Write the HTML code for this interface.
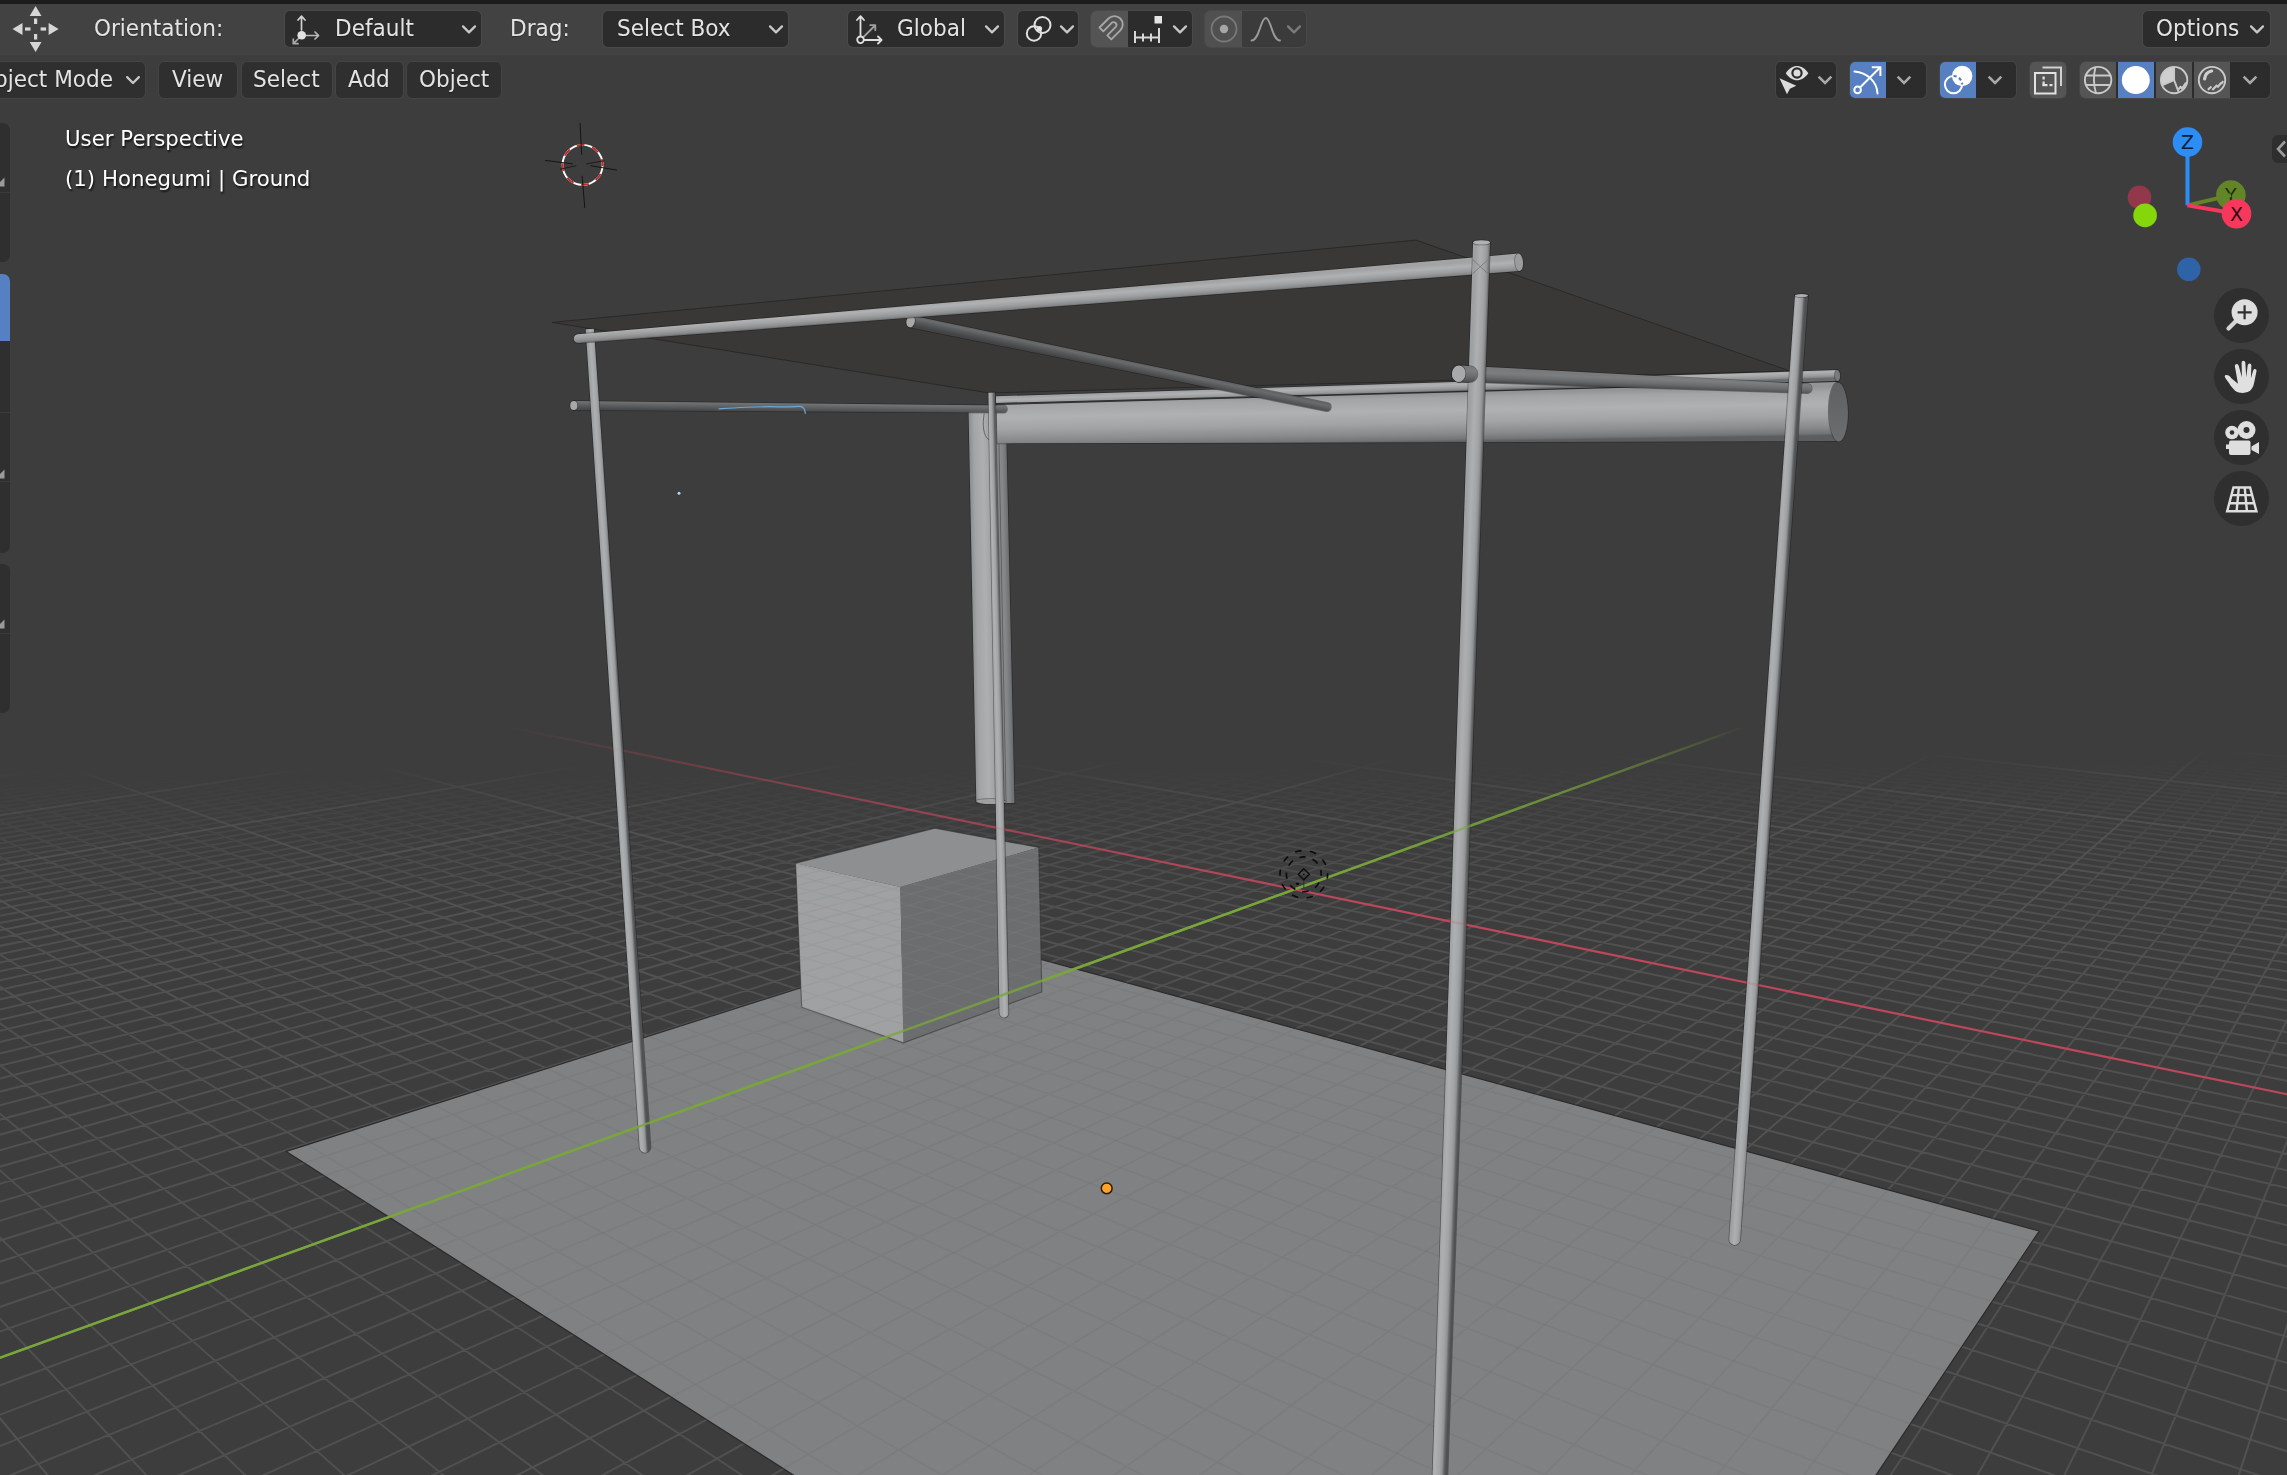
<!DOCTYPE html>
<html lang="en"><head><meta charset="utf-8"><title>Blender viewport</title>
<style>
html,body{margin:0;padding:0;background:#3d3d3d;}
body{width:2287px;height:1475px;overflow:hidden;position:relative;font-family:"DejaVu Sans","Liberation Sans",sans-serif;}
#scene{position:absolute;left:0;top:0;display:block}
#topstrip{position:absolute;left:0;top:0;width:2287px;height:3.6px;background:#1b1b1b}
#hdr{position:absolute;left:0;top:3.6px;width:2287px;height:51px;background:#424242}
.b{position:absolute;box-sizing:border-box;box-shadow:0 0 0 1px rgba(255,255,255,.04);background:#2c2c2c;border-radius:5px;height:35.8px;color:#e4e4e4;font-size:21.6px;line-height:35.8px;white-space:nowrap;overflow:hidden}
.r1{top:11.2px}
.r2{top:62.4px;height:35.2px;line-height:35.2px;background:#2f2f2f}
.lbl{position:absolute;color:#e4e4e4;font-size:21.6px;line-height:35.8px;top:10.5px;white-space:nowrap;transform:scaleY(1.03);transform-origin:0 72%;will-change:transform;text-shadow:0 1px 1px rgba(0,0,0,.35)}
.b span.t{position:absolute;top:-0.7px;transform:scaleY(1.03);transform-origin:0 72%;will-change:transform;text-shadow:0 1px 1px rgba(0,0,0,.35)}
.b svg{position:absolute}
.chev{position:absolute;top:0;height:100%}
.blue{background:#5680c2}
.gray{background:#585858}
.ov{font-size:21.3px !important;position:absolute;transform:scaleY(1.03);transform-origin:0 72%;will-change:transform;left:65px;color:#fff;font-size:21.6px;line-height:26px;white-space:nowrap;text-shadow:1px 2px 2px rgba(0,0,0,.75)}
.tb{position:absolute;left:-12px;width:21.5px;background:#2f2f2f;border-radius:7px}
.nav{position:absolute;width:55px;height:55px;border-radius:50%;background:#2f2f2f;left:2214.3px}

#objs path,#objs ellipse{stroke:#161616;stroke-opacity:.42;stroke-width:1.5px;paint-order:stroke}
#objs .ns{stroke:#77787a;stroke-opacity:1;stroke-width:.9px;paint-order:normal}
#objs #cube polygon{stroke:none}
#objs #cube path.ce{stroke:#2e2e2e;stroke-opacity:.55;stroke-width:1.1px;paint-order:normal}

.r2 span.t{top:-0.1px}

</style></head><body>
<svg id="scene" width="2287" height="1475" viewBox="0 0 2287 1475">
<defs>
<linearGradient id="fade" gradientUnits="userSpaceOnUse" x1="1143" y1="768" x2="1144.6" y2="945">
<stop offset="0" stop-color="#fff" stop-opacity="0"/><stop offset="0.2" stop-color="#fff" stop-opacity="0.3"/><stop offset="0.5" stop-color="#fff" stop-opacity="0.72"/><stop offset="0.8" stop-color="#fff" stop-opacity="0.94"/><stop offset="1" stop-color="#fff" stop-opacity="1"/>
</linearGradient>
<mask id="gm" maskUnits="userSpaceOnUse" x="0" y="0" width="2287" height="1475"><rect x="0" y="700" width="2287" height="1475" fill="url(#fade)"/></mask>
<linearGradient id="fadeM" gradientUnits="userSpaceOnUse" x1="1143" y1="758" x2="1144.2" y2="885">
<stop offset="0" stop-color="#fff" stop-opacity="0"/><stop offset="0.2" stop-color="#fff" stop-opacity="0.45"/><stop offset="0.55" stop-color="#fff" stop-opacity="0.9"/><stop offset="1" stop-color="#fff" stop-opacity="1"/>
</linearGradient>
<mask id="gmM" maskUnits="userSpaceOnUse" x="0" y="0" width="2287" height="1475"><rect x="0" y="700" width="2287" height="1475" fill="url(#fadeM)"/></mask>
<linearGradient id="fadeax" gradientUnits="userSpaceOnUse" x1="0" y1="725" x2="0" y2="900">
<stop offset="0" stop-color="#fff" stop-opacity="0"/><stop offset="0.4" stop-color="#fff" stop-opacity="0.55"/><stop offset="1" stop-color="#fff" stop-opacity="1"/>
</linearGradient>
<mask id="am" maskUnits="userSpaceOnUse" x="0" y="0" width="2287" height="1475"><rect x="0" y="700" width="2287" height="1475" fill="url(#fadeax)"/></mask>
<clipPath id="pc"><polygon points="286.2,1151.4 959.7,937.2 2039.2,1231 1552.3,1959.2"/></clipPath>
<path id="gpm" d="M9.9 735L-5 736.8M32.2 735L-5 739.5M54.5 735L-5 742.3M99.2 735L-5 748M121.6 735L-5 751M144.1 735L-5 754M166.5 735L-5 757.1M189 735L-5 760.2M211.6 735L-5 763.4M234.1 735L-5 766.6M256.7 735L-5 770M279.3 735L-5 773.3M324.7 735L-5 780.4M347.4 735L-5 784M370.1 735L-5 787.7M392.9 735L-5 791.5M415.7 735L-5 795.3M438.6 735L-5 799.3M461.4 735L-5 803.3M484.3 735L-5 807.5M507.3 735L-5 811.7M553.3 735L-5 820.5M576.3 735L-5 825M599.4 735L-5 829.7M622.5 735L-5 834.5M645.6 735L-5 839.4M668.8 735L-5 844.4M691.9 735L-5 849.6M715.2 735L-5 854.8M738.4 735L-5 860.3M785.1 735L-5 871.6M808.4 735L-5 877.5M831.8 735L-5 883.6M855.2 735L-5 889.8M878.7 735L-5 896.2M902.2 735L-5 902.8M925.7 735L-5 909.6M949.3 735L-5 916.6M972.9 735L-5 923.9M1020.1 735L-5 939M1043.8 735L-5 946.9M1067.6 735L-5 955.1M1091.3 735L-5 963.6M1115.1 735L-5 972.4M1138.9 735L-5 981.4M1162.8 735L-5 990.8M1186.7 735L-5 1000.5M1210.6 735L-5 1010.6M1258.6 735L-5 1031.9M1282.6 735L-5 1043.1M1306.7 735L-5 1054.8M1330.8 735L-5 1067M1354.9 735L-5 1079.7M1379.1 735L-5 1092.9M1403.3 735L-5 1106.6M1427.5 735L-5 1121M1451.8 735L-5 1136M1500.4 735L-5 1168.1M1524.8 735L-5 1185.3M1549.2 735L-5 1203.3M1573.7 735L-5 1222.3M1598.2 735L-5 1242.2M1622.7 735L-5 1263.2M1647.2 735L-5 1285.3M1671.8 735L-5 1308.6M1696.4 735L-5 1333.3M1745.8 735L-5 1387.2M1770.5 735L-5 1416.7M1795.3 735L-5 1448M1820.1 735L-1.3 1480M1844.9 735L83.3 1480M1869.8 735L167.9 1480M1894.7 735L252.7 1480M1919.7 735L337.6 1480M1944.7 735L422.6 1480M1994.7 735L593.1 1480M2019.8 735L678.5 1480M2045 735L764 1480M2070.1 735L849.6 1480M2095.3 735L935.4 1480M2120.6 735L1021.3 1480M2145.9 735L1107.3 1480M2171.2 735L1193.5 1480M2196.5 735L1279.8 1480M2247.3 735L1452.7 1480M2272.8 735L1539.3 1480M2292 742L1626.1 1480M2292 773.8L1713 1480M2292 812.9L1800.1 1480M2292 861.8L1887.3 1480M2292 925L1974.6 1480M2292 1009.7L2062 1480M2292 1129.2L2149.5 1480M2288.1 735L2292 735.3M2256 735L2292 738.3M2224 735L2292 741.3M2192 735L2292 744.3M2160 735L2292 747.5M2128.1 735L2292 750.6M2096.3 735L2292 753.9M2032.8 735L2292 760.5M2001.2 735L2292 764M1969.6 735L2292 767.5M1938.1 735L2292 771.1M1906.6 735L2292 774.8M1875.2 735L2292 778.5M1843.8 735L2292 782.3M1812.5 735L2292 786.2M1781.3 735L2292 790.2M1719 735L2292 798.5M1687.9 735L2292 802.8M1656.9 735L2292 807.1M1625.9 735L2292 811.6M1595 735L2292 816.2M1564.1 735L2292 820.9M1533.4 735L2292 825.7M1502.6 735L2292 830.7M1471.9 735L2292 835.7M1410.7 735L2292 846.2M1380.2 735L2292 851.7M1349.8 735L2292 857.3M1319.4 735L2292 863M1289 735L2292 868.9M1258.7 735L2292 875M1228.5 735L2292 881.2M1198.3 735L2292 887.6M1168.1 735L2292 894.2M1108 735L2292 908M1078.1 735L2292 915.2M1048.1 735L2292 922.6M1018.3 735L2292 930.3M988.5 735L2292 938.2M958.7 735L2292 946.3M929 735L2292 954.7M899.3 735L2292 963.4M869.7 735L2292 972.4M810.7 735L2292 991.2M781.3 735L2292 1001.2M751.9 735L2292 1011.5M722.5 735L2292 1022.1M693.2 735L2292 1033.2M664 735L2292 1044.7M634.8 735L2292 1056.6M605.7 735L2292 1069M576.6 735L2292 1081.9M518.6 735L2292 1109.3M489.7 735L2292 1123.9M460.8 735L2292 1139.1M432 735L2292 1155M403.2 735L2292 1171.6M374.5 735L2292 1189.1M345.8 735L2292 1207.3M317.2 735L2292 1226.4M288.6 735L2292 1246.5M231.6 735L2292 1289.9M203.2 735L2292 1313.4M174.8 735L2292 1338.2M146.5 735L2292 1364.4M118.2 735L2292 1392.2M90 735L2292 1421.6M61.8 735L2292 1453M33.6 735L2273 1480M5.6 735L2170.2 1480M-5 751.8L1965.1 1480M-5 763.2L1862.9 1480M-5 775.4L1760.8 1480M-5 788.7L1658.8 1480M-5 803L1557.1 1480M-5 818.6L1455.5 1480M-5 835.7L1354.1 1480M-5 854.4L1252.9 1480M-5 875L1151.9 1480M-5 923.1L950.3 1480M-5 951.5L849.8 1480M-5 983.5L749.4 1480M-5 1019.8L649.2 1480M-5 1061.4L549.2 1480M-5 1109.6L449.4 1480M-5 1165.9L349.7 1480M-5 1232.8L250.2 1480M-5 1313.4L150.9 1480"/><path id="gpM" d="M76.9 735L-5 745.1M302 735L-5 776.8M530.3 735L-5 816M761.7 735L-5 865.9M996.5 735L-5 931.3M1234.6 735L-5 1021M1476.1 735L-5 1151.7M1969.7 735L507.8 1480M2221.9 735L1366.2 1480M2292 1310.4L2237.2 1480M2064.6 735L2292 757.2M1750.1 735L2292 794.3M1441.3 735L2292 840.9M1138.1 735L2292 901M840.2 735L2292 981.6M260.1 735L2292 1267.7M-5 741.2L2067.6 1480M-5 897.7L1051 1480M-5 1412.4L51.7 1480"/><g id="gp"><use href="#gpm"/><use href="#gpM"/></g>
</defs>
<g mask="url(#gm)"><use href="#gpm" fill="none" stroke="#505050" stroke-width="2"/></g><g mask="url(#gmM)"><use href="#gpM" fill="none" stroke="#525252" stroke-width="2"/></g>

<polygon points="286.2,1151.4 959.7,937.2 2039.2,1231 1552.3,1959.2" fill="#808183" stroke="#2a2a2a" stroke-width="1.2"/>
<g clip-path="url(#pc)"><use href="#gp" fill="none" stroke="#6a6b6d" stroke-opacity="0.24" stroke-width="1.5"/></g>
<g mask="url(#am)"><line x1="378.1" y1="700" x2="2292" y2="1095.3" stroke="#bd485c" stroke-width="2.1"/>
<line x1="1817.9" y1="700" x2="-5" y2="1359.5" stroke="#79a63c" stroke-width="2.4"/></g>
<defs><linearGradient id="g1" gradientUnits="userSpaceOnUse" x1="1000.6" y1="621.6" x2="1010.4" y2="621.4"><stop offset="0%" stop-color="#8a8b8c"/><stop offset="50%" stop-color="#858687"/><stop offset="100%" stop-color="#6c6d6e"/></linearGradient><linearGradient id="g2" gradientUnits="userSpaceOnUse" x1="972.4" y1="605" x2="1001.8" y2="604.5"><stop offset="0%" stop-color="#8e8f90"/><stop offset="15%" stop-color="#a3a4a5"/><stop offset="45%" stop-color="#aeafb0"/><stop offset="75%" stop-color="#9c9d9e"/><stop offset="100%" stop-color="#808182"/></linearGradient><linearGradient id="g3" gradientUnits="userSpaceOnUse" x1="1416.6" y1="383.2" x2="1416.9" y2="392"><stop offset="0%" stop-color="#a2a3a4"/><stop offset="30%" stop-color="#b0b1b2"/><stop offset="65%" stop-color="#9d9e9f"/><stop offset="90%" stop-color="#868788"/><stop offset="100%" stop-color="#6c6d6e"/></linearGradient><linearGradient id="g4" gradientUnits="userSpaceOnUse" x1="1416.6" y1="393.5" x2="1417.4" y2="442.3"><stop offset="0%" stop-color="#939495"/><stop offset="10%" stop-color="#a3a4a5"/><stop offset="35%" stop-color="#b0b1b2"/><stop offset="60%" stop-color="#a2a3a4"/><stop offset="82%" stop-color="#8a8b8c"/><stop offset="95%" stop-color="#747576"/><stop offset="100%" stop-color="#5c5d5e"/></linearGradient><linearGradient id="g5" gradientUnits="userSpaceOnUse" x1="1838" y1="383" x2="1838" y2="441"><stop offset="0%" stop-color="#5f6061"/><stop offset="100%" stop-color="#6c6d6e"/></linearGradient><linearGradient id="g6" gradientUnits="userSpaceOnUse" x1="1119.9" y1="359.3" x2="1117.8" y2="369.2"><stop offset="0%" stop-color="#606162"/><stop offset="22%" stop-color="#6a6b6c"/><stop offset="55%" stop-color="#58595a"/><stop offset="85%" stop-color="#4a4b4c"/><stop offset="100%" stop-color="#434445"/></linearGradient><linearGradient id="g7" gradientUnits="userSpaceOnUse" x1="1633.6" y1="374.7" x2="1633.1" y2="387.6"><stop offset="0%" stop-color="#78797b"/><stop offset="30%" stop-color="#7c7d7f"/><stop offset="65%" stop-color="#6a6b6c"/><stop offset="90%" stop-color="#545556"/><stop offset="100%" stop-color="#464748"/></linearGradient><linearGradient id="g8" gradientUnits="userSpaceOnUse" x1="1762.1" y1="767.1" x2="1774.1" y2="767.9"><stop offset="0%" stop-color="#9fa0a1"/><stop offset="30%" stop-color="#aeafb0"/><stop offset="60%" stop-color="#a2a3a4"/><stop offset="76%" stop-color="#909192"/><stop offset="88%" stop-color="#666768"/><stop offset="100%" stop-color="#505152"/></linearGradient><linearGradient id="g9" gradientUnits="userSpaceOnUse" x1="788.6" y1="403.3" x2="788.5" y2="411.3"><stop offset="0%" stop-color="#747576"/><stop offset="30%" stop-color="#68696a"/><stop offset="70%" stop-color="#565758"/><stop offset="100%" stop-color="#48494a"/></linearGradient><linearGradient id="g10" gradientUnits="userSpaceOnUse" x1="994" y1="702.9" x2="1001.7" y2="702.7"><stop offset="0%" stop-color="#a3a4a5"/><stop offset="35%" stop-color="#b0b1b2"/><stop offset="70%" stop-color="#a0a1a2"/><stop offset="90%" stop-color="#7e7f80"/><stop offset="100%" stop-color="#5e5f60"/></linearGradient><linearGradient id="g11" gradientUnits="userSpaceOnUse" x1="612.7" y1="738.4" x2="622.2" y2="737.8"><stop offset="0%" stop-color="#9fa0a1"/><stop offset="30%" stop-color="#aeafb0"/><stop offset="60%" stop-color="#a2a3a4"/><stop offset="76%" stop-color="#909192"/><stop offset="88%" stop-color="#666768"/><stop offset="100%" stop-color="#505152"/></linearGradient><linearGradient id="g12" gradientUnits="userSpaceOnUse" x1="1048.1" y1="293.9" x2="1049.1" y2="307.1"><stop offset="0%" stop-color="#a2a3a4"/><stop offset="30%" stop-color="#b0b1b2"/><stop offset="65%" stop-color="#9d9e9f"/><stop offset="90%" stop-color="#868788"/><stop offset="100%" stop-color="#6c6d6e"/></linearGradient><linearGradient id="g13" gradientUnits="userSpaceOnUse" x1="1452.8" y1="858.9" x2="1468.8" y2="859.5"><stop offset="0%" stop-color="#9fa0a1"/><stop offset="30%" stop-color="#aeafb0"/><stop offset="60%" stop-color="#a2a3a4"/><stop offset="76%" stop-color="#909192"/><stop offset="88%" stop-color="#666768"/><stop offset="100%" stop-color="#505152"/></linearGradient><linearGradient id="g14" gradientUnits="userSpaceOnUse" x1="1464.5" y1="365.8" x2="1463.7" y2="382.1"><stop offset="0%" stop-color="#78797b"/><stop offset="30%" stop-color="#7c7d7f"/><stop offset="65%" stop-color="#6a6b6c"/><stop offset="90%" stop-color="#545556"/><stop offset="100%" stop-color="#464748"/></linearGradient></defs><g id="objs"><g id="cube"><polygon points="795.6,863.3 935,828.2 1038.7,847.5 900.4,887.1" fill="#8e8f90" /><polygon points="795.6,863.3 900.4,887.1 903.4,1042.8 801.7,1007.2" fill="#a0a1a2" /><polygon points="900.4,887.1 1038.7,847.5 1041.8,991.9 903.4,1042.8" fill="#6c6d6e" /><path d="M795.6 863.3L935 828.2L1038.7 847.5L1041.8 991.9L903.4 1042.8L801.7 1007.2Z" fill="none" class="ce"/></g>
<clipPath id="cc"><polygon points="795.6,863.3 900.4,887.1 1038.7,847.5 1041.8,991.9 903.4,1042.8 801.7,1007.2"/></clipPath>
<g clip-path="url(#cc)"><use href="#gp" fill="none" stroke="#88898a" stroke-opacity="0.2" stroke-width="1.5"/></g>
<polygon points="551.9,322.4 1416.1,240.1 1790,371 989,393" fill="#393836" stroke="#1e1e1d" stroke-opacity="0.6" stroke-width="1" stroke-linejoin="round"/>
<path d="M997 440.1 L1004.1 803.1 L1014.5 802.9 L1006.4 439.9Z" fill="url(#g1)" />
<path d="M968.5 408.3 L976.3 801.8 L1005.7 801.2 L997.9 407.7Z" fill="url(#g2)" />
<ellipse cx="991" cy="801.5" rx="14.8" ry="2.6" transform="rotate(1 991 801.5)" fill="#9fa0a1" />
<path d="M984.200 413.600C982.300 424 983 435.500 988.800 439.800" class="ns" fill="none" style="stroke:#5c5d5e"/>
<path d="M995.9 396.3 L1837.3 370.1 L1837.7 381.1 L996.1 402.9Z" fill="url(#g3)" />
<ellipse cx="1837.5" cy="375.6" rx="2.6" ry="5.5" transform="rotate(-1.6 1837.5 375.6)" fill="#797a7b" />
<path d="M996.7 405 L1836.6 382.1 L1837.4 441.1 L997.3 443.4Z" fill="url(#g4)" />
<defs></defs>
<ellipse cx="1838.3" cy="412" rx="9.6" ry="29.6" transform="rotate(-1 1838.3 412)" fill="url(#g5)" />
<path d="M911.8 315.5 L1327.9 403 A4.2 4.2 0 0 1 1326.3 411.2 L909.4 327.3Z" fill="url(#g6)" />
<ellipse cx="910.6" cy="321.4" rx="4.2" ry="6" transform="rotate(11.6 910.6 321.4)" fill="#a7a8a9" />
<path d="M1459.1 365.5 L1808.2 384 A4.7 4.7 0 0 1 1807.8 393.2 L1458.3 381.9Z" fill="url(#g7)" />
<ellipse cx="1458.7" cy="373.7" rx="6.8" ry="8.3" transform="rotate(2.4 1458.7 373.7)" fill="#a8a9aa" />
<path d="M1795 295.1 L1729.2 1239 A5.5 5.5 0 0 0 1740.2 1239.8 L1808 296.1Z" fill="url(#g8)" />
<ellipse cx="1801.5" cy="295.6" rx="6.5" ry="1.6" transform="rotate(0 1801.5 295.6)" fill="#adaeaf" />
<path d="M573.6 400.9 L1003.5 405.6 A3.6 3.6 0 0 1 1003.5 412.8 L573.6 409.9Z" fill="url(#g9)" />
<ellipse cx="573.8" cy="405.4" rx="3.6" ry="4.5" transform="rotate(0 573.8 405.4)" fill="#a6a7a8" />
<path d="M988.4 392.7 L999.5 1013.1 A4.5 4.5 0 0 0 1008.5 1012.9 L995 392.5Z" fill="url(#g10)" />
<path d="M585.7 329.3 L639.6 1147.6 A5.5 5.5 0 0 0 650.6 1146.8 L593.9 328.7Z" fill="url(#g11)" />
<path d="M577.8 334.3 L1518.3 253.6 L1519.7 271 L578.6 343.1 A4.4 4.4 0 0 1 577.8 334.3Z" fill="url(#g12)" />
<ellipse cx="1519" cy="262.3" rx="4" ry="8.8" transform="rotate(-4.6 1519 262.3)" fill="#9b9c9d" />
<path d="M1473.1 242.1 L1432.5 1475.7 L1447.5 1476.3 L1490.1 242.7Z" fill="url(#g13)" />
<ellipse cx="1481.6" cy="242.4" rx="8.5" ry="2.2" transform="rotate(0 1481.6 242.4)" fill="#b0b1b2" />
<path d="M1459.1 365.5 L1469.9 366.1 A8.1 8.1 0 0 1 1469.1 382.3 L1458.3 381.9Z" fill="url(#g14)" />
<ellipse cx="1458.7" cy="373.7" rx="6.8" ry="8.3" transform="rotate(2.4 1458.7 373.7)" fill="#a8a9aa" />
<path d="M1473 259.800L1487.500 273.400M1489.500 258.200L1472.300 274" stroke="#747576" stroke-width="0.9" fill="none" class="ns"/></g>
<g opacity="0.8" mask="url(#am)"><line x1="1817.9" y1="700" x2="-5" y2="1359.5" stroke="#7aa63c" stroke-width="2.4"/></g>
<g opacity="0.18" mask="url(#am)"><line x1="378.1" y1="700" x2="2292" y2="1095.3" stroke="#c14a5e" stroke-width="2.4"/></g>
<g id="cursor3d"><circle cx="582.6" cy="164.9" r="20" fill="none" stroke="#fff" stroke-width="1.900"/><circle cx="582.6" cy="164.9" r="20" fill="none" stroke="#c1272d" stroke-width="1.900" stroke-dasharray="7.850 7.850" stroke-dashoffset="6.5"/>
<g stroke="#121212" stroke-width="0.95" stroke-linecap="butt" fill="none"><path d="M545.100 160.400L572.900 163.900M590.500 165.700L617 170.100M580 122.900L581.700 154.600M582.100 175.800L584.800 208"/><path d="M560.100 169.200L576.400 165.700M586.100 163.900L604.600 160.800" stroke-opacity="0.8"/></g></g>
<g id="light" fill="none" stroke="#0b0b0b" stroke-width="1.600"><circle cx="1303.8" cy="874.3" r="23.800" stroke-dasharray="6.500 8.450" stroke-dashoffset="2"/><circle cx="1303.8" cy="874.3" r="17.400" stroke-dasharray="6.500 7.160" stroke-dashoffset="5"/><path d="M1303.8 868.8l5.500 5.500l-5.500 5.500l-5.500-5.500z" stroke-width="1.400"/><path d="M1303.8 879.8V888.500" stroke-width="1" stroke="#222" stroke-opacity="0.700"/></g><circle cx="1303.8" cy="874.3" r="0.900" fill="#0b0b0b"/><ellipse cx="1297.500" cy="883.800" rx="1.800" ry="1.100" fill="#0b0b0b"/>
<circle cx="1106.700" cy="1188.300" r="5.400" fill="#ffa32b" stroke="#2b1c08" stroke-width="1.500"/>
<path d="M719 408.800C740 407.500 760 406.200 778 406.800S795 405.800 801.500 406.600C804 407.500 805 410 805.300 413.300" fill="none" stroke="#6aa7dc" stroke-width="1.200" stroke-linecap="round"/>
<circle cx="679" cy="493.200" r="1.500" fill="#b5d4f0"/>
</svg>
<div id="topstrip"></div><div id="hdr"></div>
<svg style="position:absolute;left:10px;top:5px" width="50" height="48" viewBox="0 0 50 48"><g fill="#d6d6d6"><polygon points="25.6,1 31.5,11 19.7,11"/><polygon points="25.6,47 31.5,37 19.7,37"/><polygon points="2.5,24 12.5,18 12.5,30"/><polygon points="48.6,24 38.6,18 38.6,30"/><rect x="24" y="13.5" width="3.2" height="5.5"/><rect x="24" y="29" width="3.2" height="5.5"/><rect x="15" y="22.4" width="5.5" height="3.2"/><rect x="30.6" y="22.4" width="5.5" height="3.2"/></g></svg>
<div class="lbl" style="left:94px">Orientation:</div>
<div class="b r1" style="left:285.4px;width:195.5px"><svg style="left:4px;top:2px" width="34" height="32" viewBox="0 0 34 32"><g fill="none" stroke="#d0d0d0" stroke-width="1.7" stroke-linecap="round" stroke-linejoin="round"><path d="M12.5 17V3.5M9 7l3.5-3.8L16 7" /><path d="M17 22.5h12.5M26 19l3.6 3.5L26 26" stroke="#b9b9b9"/><path d="M9.5 25.5L4.5 30.5M4.3 26v4.7H9" stroke="#a9a9a9"/></g><circle cx="12.7" cy="22.3" r="4.3" fill="#e2e2e2"/></svg><span class="t" style="left:49.5px">Default</span><svg class="chev" style="left:175px" width="18" height="36" viewBox="0 0 18 36"><path d="M3 15.5l6 6 6-6" fill="none" stroke="#c8c8c8" stroke-width="2.3" stroke-linecap="round" stroke-linejoin="round"/></svg></div>
<div class="lbl" style="left:509.5px">Drag:</div>
<div class="b r1" style="left:602.8px;width:185.3px"><span class="t" style="left:14.5px">Select Box</span><svg class="chev" style="left:164px" width="18" height="36" viewBox="0 0 18 36"><path d="M3 15.5l6 6 6-6" fill="none" stroke="#c8c8c8" stroke-width="2.3" stroke-linecap="round" stroke-linejoin="round"/></svg></div>
<div class="b r1" style="left:848px;width:156px"><svg style="left:5px;top:2px" width="34" height="32" viewBox="0 0 34 32"><g fill="none" stroke="#e0e0e0" stroke-width="1.8" stroke-linecap="round" stroke-linejoin="round"><path d="M7.5 23V3.5M4 7l3.5-3.8L11 7"/><path d="M11 27h17.5M25 23.5l3.6 3.5L25 30.5"/><path d="M10 24.5L22 12.5M17.3 12.2h5v5" stroke="#a0a0a0"/><circle cx="7.5" cy="26.8" r="3.3" fill="#2c2c2c"/></g></svg><span class="t" style="left:49px">Global</span><svg class="chev" style="left:135px" width="18" height="36" viewBox="0 0 18 36"><path d="M3 15.5l6 6 6-6" fill="none" stroke="#c8c8c8" stroke-width="2.3" stroke-linecap="round" stroke-linejoin="round"/></svg></div>
<div class="b r1" style="left:1017.9px;width:59.9px"><svg style="left:5px;top:3px" width="32" height="30" viewBox="0 0 32 30"><g fill="none" stroke="#e0e0e0" stroke-width="2"><circle cx="19.5" cy="11" r="8"/><circle cx="11" cy="19.5" r="7.2"/></g><circle cx="16.5" cy="14.5" r="2.6" fill="#e6e6e6"/></svg><svg class="chev" style="left:40px" width="18" height="36" viewBox="0 0 18 36"><path d="M3 15.5l6 6 6-6" fill="none" stroke="#c8c8c8" stroke-width="2.3" stroke-linecap="round" stroke-linejoin="round"/></svg></div>
<div class="b r1" style="left:1091.4px;width:100.4px"><div style="position:absolute;left:0;top:0;width:37px;height:100%;background:#545454"></div><svg style="left:3px;top:2px" width="32" height="32" viewBox="0 0 32 32"><path d="M5.5 14.5l9-9a8.3 8.3 0 0 1 11.8 11.8l-9 9-4-4 8.7-8.7a2.9 2.9 0 0 0-4-4l-8.7 8.7z" fill="none" stroke="#a8a8a8" stroke-width="1.8" stroke-linejoin="round"/></svg><svg style="left:41px;top:2px" width="32" height="32" viewBox="0 0 32 32"><g stroke="#d8d8d8" stroke-width="2" fill="none"><path d="M2.5 24.5h24M3 18v12M11 20.5v8M19 20.5v8M27 15v15"/></g><rect x="22.5" y="3" width="7.5" height="7.5" fill="#e4e4e4"/></svg><svg class="chev" style="left:80px" width="18" height="36" viewBox="0 0 18 36"><path d="M3 15.5l6 6 6-6" fill="none" stroke="#c8c8c8" stroke-width="2.3" stroke-linecap="round" stroke-linejoin="round"/></svg></div>
<div class="b r1" style="left:1205.4px;width:100.4px;background:#3b3b3b"><div style="position:absolute;left:0;top:0;width:37px;height:100%;background:#505050"></div><svg style="left:2.5px;top:2px" width="32" height="32" viewBox="0 0 32 32"><circle cx="16" cy="16" r="12.5" fill="none" stroke="#787878" stroke-width="1.8"/><circle cx="16" cy="16" r="4.2" fill="#a6a6a6"/></svg><svg style="left:44px;top:2px" width="34" height="32" viewBox="0 0 34 32"><path d="M2.5 27.5c8 0 9-22.5 14.3-22.5S23 27.5 31 27.5" fill="none" stroke="#9a9a9a" stroke-width="1.9" stroke-linecap="round"/></svg><svg class="chev" style="left:80px" width="18" height="36" viewBox="0 0 18 36"><path d="M3 15.5l6 6 6-6" fill="none" stroke="#7c7c7c" stroke-width="2.3" stroke-linecap="round" stroke-linejoin="round"/></svg></div>
<div class="b r1" style="left:2143.3px;width:127px"><span class="t" style="left:13px">Options</span><svg class="chev" style="left:105px" width="18" height="36" viewBox="0 0 18 36"><path d="M3 15.5l6 6 6-6" fill="none" stroke="#c8c8c8" stroke-width="2.3" stroke-linecap="round" stroke-linejoin="round"/></svg></div>

<div class="b r2" style="left:-30px;width:175px"><span class="t" style="left:7px">Object Mode</span><svg class="chev" style="left:154px" width="18" height="36" viewBox="0 0 18 36"><path d="M3 15.5l6 6 6-6" fill="none" stroke="#c8c8c8" stroke-width="2.3" stroke-linecap="round" stroke-linejoin="round"/></svg></div>
<div class="b r2" style="left:159.2px;width:77.8px"><span class="t" style="left:12.5px">View</span></div>
<div class="b r2" style="left:241.5px;width:90px"><span class="t" style="left:11.5px">Select</span></div>
<div class="b r2" style="left:336px;width:66.5px"><span class="t" style="left:12px">Add</span></div>
<div class="b r2" style="left:407px;width:94.4px"><span class="t" style="left:12px">Object</span></div>
<div class="b r2" style="left:1776px;width:59.8px;background:#2c2c2c"><svg style="left:0;top:0" width="40" height="36" viewBox="0 0 40 36"><path d="M9.8 11.2C13 6.3 17 4 21 4s8.2 2.3 11.3 7.2C29 16 25 18.2 21 18.2S13 16 9.8 11.2z" fill="#dcdcdc"/><circle cx="21" cy="11" r="4.6" fill="none" stroke="#2c2c2c" stroke-width="2.2"/><polygon points="3.5,16.2 20.3,23.8 13.9,26.7 11,32.2" fill="#dcdcdc"/></svg><svg class="chev" style="left:39.5px" width="18" height="36" viewBox="0 0 18 36"><path d="M2.5 15l6.5 6.5 6.5-6.5" fill="none" stroke="#a8a8a8" stroke-width="2.6" stroke-linecap="butt" stroke-linejoin="miter"/></svg></div>
<div class="b r2" style="left:1849.8px;width:76px;background:#2c2c2c"><div class="blue" style="position:absolute;left:0;top:0;width:36.2px;height:100%"></div><svg style="left:0;top:0" width="37" height="36" viewBox="0 0 37 36"><g fill="none" stroke="#fff" stroke-width="2" stroke-linecap="round"><path d="M4.5 9.5c12.5 1 22.500 10 23 22"/><path d="M9.5 26L29.500 6"/><path d="M21.800 5.3h8.600v8.600" stroke-linejoin="miter" stroke-linecap="butt"/></g><circle cx="7.6" cy="27.9" r="3.3" fill="#5680c2" stroke="#fff" stroke-width="2"/></svg><svg class="chev" style="left:45.5px" width="18" height="36" viewBox="0 0 18 36"><path d="M2.5 15l6.5 6.5 6.5-6.5" fill="none" stroke="#a8a8a8" stroke-width="2.6" stroke-linecap="butt" stroke-linejoin="miter"/></svg></div>
<div class="b r2" style="left:1939.8px;width:76px;background:#2c2c2c"><div class="blue" style="position:absolute;left:0;top:0;width:36.2px;height:100%"></div><svg style="left:0;top:0" width="37" height="36" viewBox="0 0 37 36"><circle cx="22.200" cy="14" r="10.2" fill="#fff"/><circle cx="13.500" cy="22.600" r="8.600" fill="none" stroke="#fff" stroke-width="2"/><path d="M13.5 14a8.600 8.600 0 0 1 8.600 8.600" fill="none" stroke="#5680c2" stroke-width="2.2" stroke-dasharray="3.2 2.600"/></svg><svg class="chev" style="left:46px" width="18" height="36" viewBox="0 0 18 36"><path d="M2.5 15l6.5 6.5 6.5-6.5" fill="none" stroke="#a8a8a8" stroke-width="2.6" stroke-linecap="butt" stroke-linejoin="miter"/></svg></div>
<div class="b r2 gray" style="left:2030.3px;width:35.6px;background:#555"><svg style="left:0;top:0" width="36" height="36" viewBox="0 0 36 36"><g fill="none" stroke="#e2e2e2" stroke-width="2"><rect x="5" y="11" width="20.5" height="20.500"/><path d="M12.5 5.5h18.500V24" stroke="#d0d0d0"/></g><g fill="#e2e2e2"><rect x="12.500" y="14.500" width="2.200" height="3"/><rect x="12.500" y="19.500" width="2.200" height="4.500"/><rect x="12.500" y="22" width="5" height="2.200"/><rect x="19.500" y="22" width="3" height="2.200"/></g></svg></div>
<div class="b r2" style="left:2080.1px;width:189.8px;background:#2c2c2c"><div style="position:absolute;left:0;top:0;width:36px;height:100%;background:#555"></div><div class="blue" style="position:absolute;left:37.6px;top:0;width:36.6px;height:100%"></div><div style="position:absolute;left:75.8px;top:0;width:36.4px;height:100%;background:#555"></div><div style="position:absolute;left:113.8px;top:0;width:36.3px;height:100%;background:#555"></div><svg style="left:0;top:0" width="152" height="36" viewBox="0 0 152 36"><g fill="none" stroke="#c9c9c9" stroke-width="1.900"><circle cx="18.100" cy="18.100" r="13.200"/><path d="M5.500 13.500h25.200M5.500 23h25.200M15.500 5c-2 8-2 18 0.500 26.200"/></g><circle cx="55.800" cy="18.100" r="14" fill="#fff"/><g><path d="M94.100 18.100V4.900A13.200 13.200 0 0 0 82 23.500z" fill="#cfcfcf"/><circle cx="94.100" cy="18.100" r="13.200" fill="none" stroke="#c9c9c9" stroke-width="1.900"/><g stroke="#c9c9c9" stroke-width="1.900" fill="none"><path d="M94.100 5v13.100L82 23.500"/><path d="M94.100 18.100l4.500 11.800"/><path d="M98.200 27.600l3-3.300M101.200 27.200l4-4.800M104.200 23.500l2-2.800" stroke-width="2.200"/></g></g><g><circle cx="132" cy="18.100" r="13.200" fill="none" stroke="#c9c9c9" stroke-width="1.900"/><path d="M124.600 17c0.400-4.200 3-7.200 7-8" fill="none" stroke="#cfcfcf" stroke-width="3.200" stroke-linecap="round"/><g stroke="#c9c9c9" stroke-width="2.200" fill="none"><path d="M127.900 27.800l3.500-3.300M132.300 28l4.900-5M137.200 25.500l4.100-4.700M141.200 21.800l2-2.600"/></g></g></svg><svg class="chev" style="left:161px" width="18" height="36" viewBox="0 0 18 36"><path d="M2.5 15l6.5 6.5 6.5-6.5" fill="none" stroke="#a8a8a8" stroke-width="2.6" stroke-linecap="butt" stroke-linejoin="miter"/></svg></div>
<div class="ov" style="top:126px">User Perspective</div>
<div class="ov" style="top:166px">(1) Honegumi | Ground</div>
<div class="tb" style="top:123.2px;height:138.90000000000003px"><div style="position:absolute;left:0;width:100%;top:68.60000000000001px;height:1.2px;background:#3a3a3a"></div></div><svg style="position:absolute;left:0;top:175.8px" width="6" height="11" viewBox="0 0 6 11"><polygon points="0,10.500 4.500,10.500 4.500,1.500 0,6" fill="#9a9a9a"/></svg>
<div class="tb" style="top:273.5px;height:279.1px"><div style="position:absolute;left:0;width:100%;top:0.0px;height:67.30000000000001px;background:#5680c2;border-radius:7px 7px 0 0"></div><div style="position:absolute;left:0;width:100%;top:138.10000000000002px;height:1.2px;background:#3a3a3a"></div><div style="position:absolute;left:0;width:100%;top:207.5px;height:1.2px;background:#3a3a3a"></div></div><svg style="position:absolute;left:0;top:467.5px" width="6" height="11" viewBox="0 0 6 11"><polygon points="0,10.500 4.500,10.500 4.500,1.500 0,6" fill="#9a9a9a"/></svg>
<div class="tb" style="top:564px;height:148.60000000000002px"><div style="position:absolute;left:0;width:100%;top:68.60000000000002px;height:1.2px;background:#3a3a3a"></div></div><svg style="position:absolute;left:0;top:618.2px" width="6" height="11" viewBox="0 0 6 11"><polygon points="0,10.500 4.500,10.500 4.500,1.500 0,6" fill="#9a9a9a"/></svg>
<svg style="position:absolute;left:2110px;top:115px" width="177" height="420" viewBox="2110 115 177 420"><circle cx="2139.5" cy="197.300" r="11.800" fill="#93384b"/><circle cx="2188.800" cy="269.300" r="11.800" fill="#2f63a8"/><circle cx="2230.900" cy="195.100" r="14.800" fill="#638528"/><text x="2230.900" y="201.500" font-size="19" text-anchor="middle" fill="#1e2a0c" font-family="DejaVu Sans, Liberation Sans, sans-serif">Y</text><line x1="2187.500" y1="205.400" x2="2230.900" y2="195.100" stroke="#638528" stroke-width="4"/><line x1="2187.500" y1="205.400" x2="2187.500" y2="150" stroke="#2c8ef4" stroke-width="4"/><line x1="2187.500" y1="205.400" x2="2236.500" y2="213.800" stroke="#f8375c" stroke-width="4"/><circle cx="2145.100" cy="215.400" r="11.800" fill="#86d60c"/><circle cx="2187.500" cy="142.100" r="14.800" fill="#2c8ef4"/><text x="2187.500" y="148.900" font-size="19" text-anchor="middle" fill="#0a2038" font-family="DejaVu Sans, Liberation Sans, sans-serif">Z</text><circle cx="2236.500" cy="213.800" r="14.800" fill="#f8375c"/><text x="2236.500" y="220.600" font-size="19" text-anchor="middle" fill="#2a0a10" font-family="DejaVu Sans, Liberation Sans, sans-serif">X</text></svg>
<div style="position:absolute;left:2272px;top:135px;width:20px;height:27.500px;background:#2e2e2e;border-radius:6px 0 0 6px"></div><svg style="position:absolute;left:2274px;top:139px" width="13" height="20" viewBox="0 0 13 20"><path d="M11 2.500L4 10l7 7.500" fill="none" stroke="#9b9b9b" stroke-width="2.600"/></svg>
<div class="nav" style="top:288.3px"></div>
<div class="nav" style="top:349.4px"></div>
<div class="nav" style="top:410.2px"></div>
<div class="nav" style="top:470.7px"></div>
<svg style="position:absolute;left:2214.300px;top:288.300px" width="55" height="55" viewBox="0 0 55 55"><line x1="14.500" y1="40.500" x2="23.500" y2="31.500" stroke="#d4d4d4" stroke-width="4.200" stroke-linecap="round"/><circle cx="30.600" cy="24.300" r="13" fill="#dedede"/><path d="M30.600 17.300v14M23.600 24.300h14" stroke="#2f2f2f" stroke-width="2.200"/></svg>
<svg style="position:absolute;left:2214.300px;top:349.400px" width="55" height="55" viewBox="0 0 55 55"><path transform="translate(2.500 4.500) scale(0.93)" d="M16 26.500c-2-2.500-4.500-4-6.500-3-1.500 1 0 3 1.500 5 3 4 5.500 8.500 9 11.500 3.500 2.500 9.500 3 13.500 1.500 4-1.500 6-5 7-10l2.500-12.500c0.500-2.500-2.500-3.500-3.500-1l-2.500 8.500 0.500-13.500c0-3-3.500-3-4 0l-1.500 12.500-1-15.500c-0.200-3-4-3-4 0l0.300 15.500-3.500-12.500c-1-3-4.500-2-4 1l3.300 18.500z" fill="#e0e0e0"/></svg>
<svg style="position:absolute;left:2214.300px;top:410.200px" width="55" height="55" viewBox="0 0 55 55"><g transform="translate(-2 3.500)"><g fill="#dedede"><circle cx="20" cy="19" r="6.800"/><circle cx="34.500" cy="16.500" r="9"/><rect x="17" y="27" width="21.500" height="14.500" rx="2"/><polygon points="39.500,33 47,28.500 47,40.500 39.500,36.500"/><rect x="14" y="31" width="4" height="4.500"/></g><circle cx="20" cy="19" r="2.300" fill="#2f2f2f"/><circle cx="34.500" cy="16.500" r="3" fill="#2f2f2f"/></g></svg>
<svg style="position:absolute;left:2214.300px;top:470.700px" width="55" height="55" viewBox="0 0 55 55"><g transform="translate(2.800 3.400) scale(0.9)" fill="none" stroke="#dedede" stroke-width="2.700" stroke-linejoin="miter"><path d="M18.500 14.500h18.500l7 26.500h-32.500z"/><path d="M24.500 14.500l-2.500 26.500M31 14.500l2.500 26.500M16.300 23h23M14 32h27.500"/></g></svg>

</body></html>
